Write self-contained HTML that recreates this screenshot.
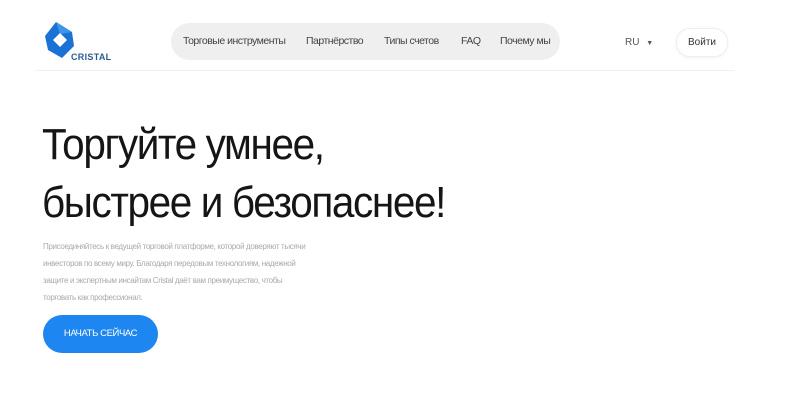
<!DOCTYPE html>
<html><head><meta charset="utf-8"><style>
body{margin:0;width:800px;height:400px;background:#fff;font-family:"Liberation Sans",sans-serif;position:relative;overflow:hidden}
.abs{position:absolute}
.nav{left:171px;top:23px;width:389px;height:37px;background:#efefef;border-radius:19px}
.nav span{position:absolute;top:12px;font-size:10.5px;color:#444;letter-spacing:-0.5px}
.sep{left:35px;top:70px;width:700px;height:1px;background:#f1f1f1}
h1{position:absolute;left:42px;top:116px;margin:0;font-weight:400;font-size:44px;line-height:58px;color:#151515;letter-spacing:-1.5px;transform:scaleX(0.92);transform-origin:left top;white-space:nowrap}
p{position:absolute;left:43px;top:238px;margin:0;white-space:nowrap;font-size:8px;line-height:17px;color:#aaa;letter-spacing:-0.35px}
.btn{left:43px;top:315px;width:115px;height:38px;background:#1d86f0;border-radius:19px;color:#fff;font-size:9.5px;text-align:center;line-height:38px;letter-spacing:-0.4px}
.login{left:676px;top:28px;width:50px;height:27px;border:1px solid #eee;border-radius:14px;font-size:10px;text-align:center;line-height:27px;color:#333;box-shadow:0 1px 3px rgba(0,0,0,.06)}
</style></head><body>
<svg class="abs" style="left:42px;top:20px" width="36" height="40" viewBox="0 0 36 40">
<path d="M14 2 L30 12 L32 26 L20 38 L6 30 L3 16 Z" fill="#1a73d4"/>
<path d="M14 2 L30 12 L18 14 Z" fill="#3f95ea"/>
<path d="M18 13 L25 20 L18 27 L11 20 Z" fill="#fff"/>
</svg>
<div class="abs" style="left:71px;top:52px;font-size:9px;font-weight:bold;color:#2a5d8f;letter-spacing:0.3px">CRISTAL</div>
<div class="abs nav">
<span style="left:12px">Торговые инструменты</span>
<span style="left:135px">Партнёрство</span>
<span style="left:213px">Типы счетов</span>
<span style="left:290px">FAQ</span>
<span style="left:329px">Почему мы</span>
</div>
<div class="abs" style="left:625px;top:37px;font-size:10px;color:#555">RU <span style="font-size:7px;margin-left:4px">▼</span></div>
<div class="abs login">Войти</div>
<div class="abs sep"></div>
<h1>Торгуйте умнее,<br>быстрее и безопаснее!</h1>
<p>Присоединяйтесь к ведущей торговой платформе, которой доверяют тысячи<br>инвесторов по всему миру. Благодаря передовым технологиям, надежной<br>защите и экспертным инсайтам Cristal даёт вам преимущество, чтобы<br>торговать как профессионал.</p>
<div class="abs btn">НАЧАТЬ СЕЙЧАС</div>
</body></html>
